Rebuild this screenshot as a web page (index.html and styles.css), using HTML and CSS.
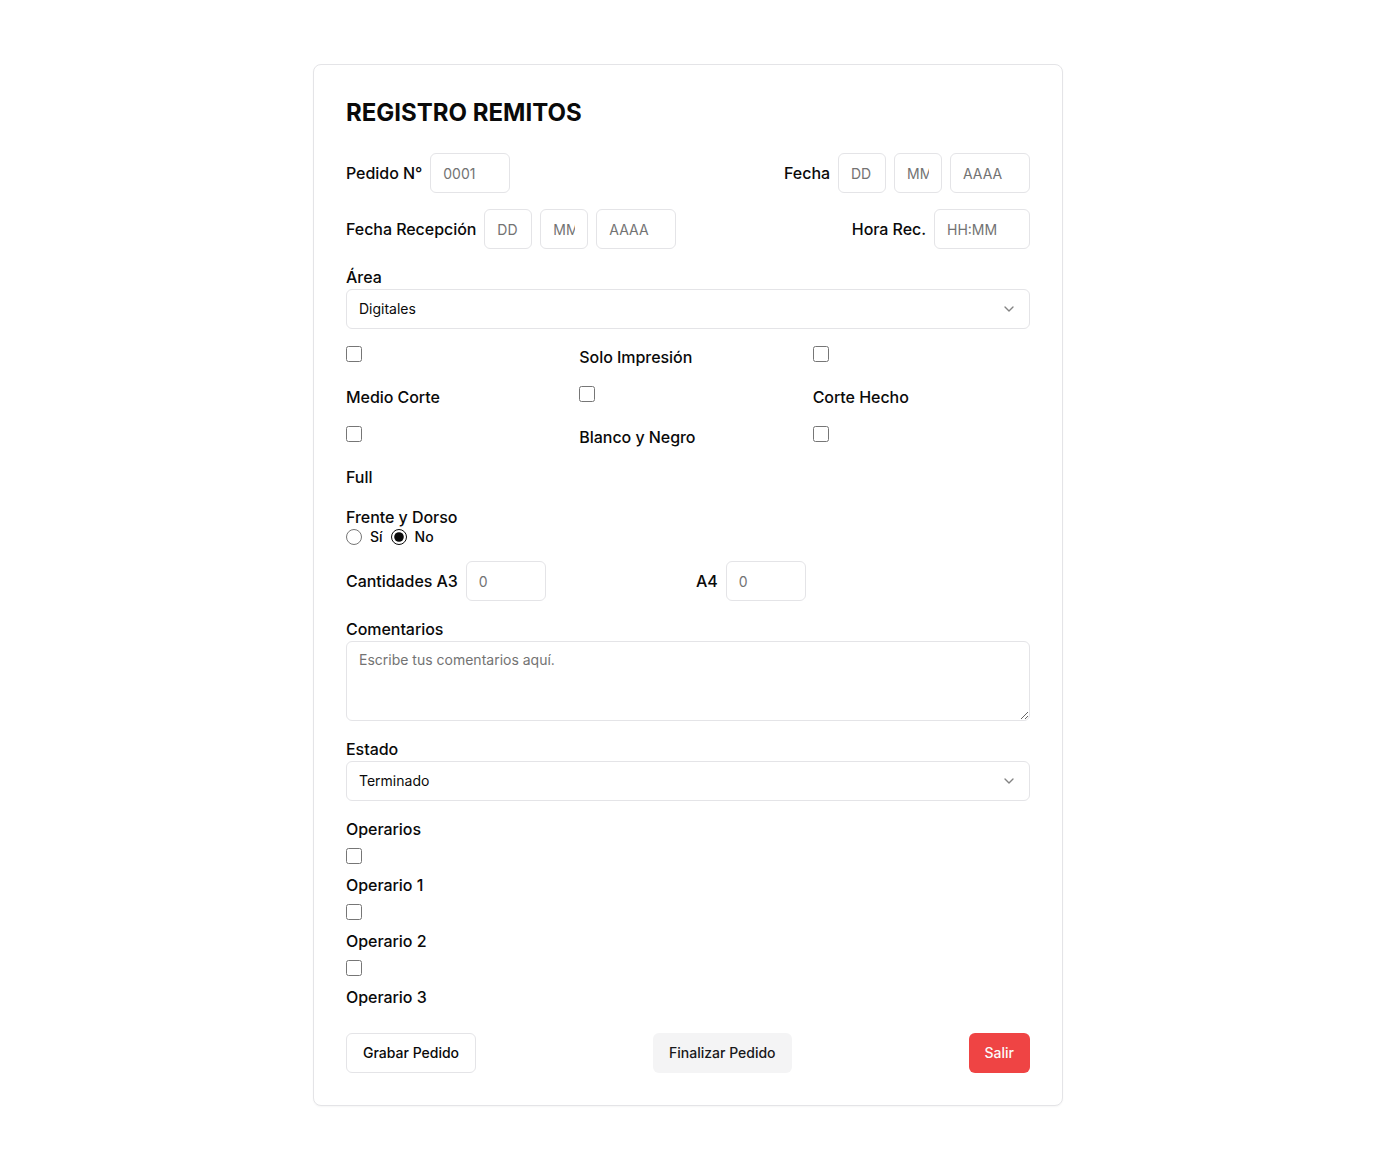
FILE: index.html
```html
<!DOCTYPE html>
<html lang="es">
<head>
<meta charset="utf-8">
<title>Registro Remitos</title>
<link rel="stylesheet" href="styles.css">
</head>
<body>
<div class="card">
  <h1 class="title">REGISTRO REMITOS</h1>
  <form class="form">
    <div class="row">
      <div class="inline-field">
        <label class="label">Pedido N°</label>
        <input class="input w20" placeholder="0001">
      </div>
      <div class="inline-field">
        <label class="label">Fecha</label>
        <input class="input w12" placeholder="DD">
        <input class="input w12" placeholder="MM">
        <input class="input w20" placeholder="AAAA">
      </div>
    </div>
    <div class="row">
      <div class="inline-field">
        <label class="label">Fecha Recepción</label>
        <input class="input w12" placeholder="DD">
        <input class="input w12" placeholder="MM">
        <input class="input w20" placeholder="AAAA">
      </div>
      <div class="inline-field">
        <label class="label">Hora Rec.</label>
        <input class="input w24" placeholder="HH:MM">
      </div>
    </div>
    <div class="stack">
      <label class="label block">Área</label>
      <button type="button" class="select">
        <span>Digitales</span>
        <svg class="chev" width="16" height="16" viewBox="0 0 24 24" fill="none" stroke="currentColor" stroke-width="2" stroke-linecap="round" stroke-linejoin="round"><path d="m6 9 6 6 6-6"/></svg>
      </button>
    </div>
    <div class="grid3">
      <div class="cell"><input type="checkbox" class="check"></div>
      <div class="cell"><label class="label">Solo Impresión</label></div>
      <div class="cell"><input type="checkbox" class="check"></div>
      <div class="cell"><label class="label">Medio Corte</label></div>
      <div class="cell"><input type="checkbox" class="check"></div>
      <div class="cell"><label class="label">Corte Hecho</label></div>
      <div class="cell"><input type="checkbox" class="check"></div>
      <div class="cell"><label class="label">Blanco y Negro</label></div>
      <div class="cell"><input type="checkbox" class="check"></div>
      <div class="cell"><label class="label">Full</label></div>
    </div>
    <div class="stack">
      <label class="label block">Frente y Dorso</label>
      <div class="radios">
        <input type="radio" name="fyd" class="radio" id="fyd-si">
        <label for="fyd-si" class="radio-label">Sí</label>
        <input type="radio" name="fyd" class="radio" id="fyd-no" checked>
        <label for="fyd-no" class="radio-label">No</label>
      </div>
    </div>
    <div class="grid2">
      <div class="inline-field">
        <label class="label">Cantidades A3</label>
        <input class="input w20" placeholder="0">
      </div>
      <div class="inline-field">
        <label class="label">A4</label>
        <input class="input w20" placeholder="0">
      </div>
    </div>
    <div class="stack">
      <label class="label block">Comentarios</label>
      <textarea class="textarea" placeholder="Escribe tus comentarios aquí."></textarea>
    </div>
    <div class="stack">
      <label class="label block">Estado</label>
      <button type="button" class="select">
        <span>Terminado</span>
        <svg class="chev" width="16" height="16" viewBox="0 0 24 24" fill="none" stroke="currentColor" stroke-width="2" stroke-linecap="round" stroke-linejoin="round"><path d="m6 9 6 6 6-6"/></svg>
      </button>
    </div>
    <div class="stack">
      <label class="label block">Operarios</label>
      <div class="op-list">
        <div class="op-item">
          <div class="op-check"><input type="checkbox" class="check"></div>
          <label class="label block op-label">Operario 1</label>
        </div>
        <div class="op-item">
          <div class="op-check"><input type="checkbox" class="check"></div>
          <label class="label block op-label">Operario 2</label>
        </div>
        <div class="op-item">
          <div class="op-check"><input type="checkbox" class="check"></div>
          <label class="label block op-label">Operario 3</label>
        </div>
      </div>
    </div>
    <div class="actions">
      <button type="button" class="btn btn-outline">Grabar Pedido</button>
      <button type="button" class="btn btn-secondary">Finalizar Pedido</button>
      <button type="button" class="btn btn-danger">Salir</button>
    </div>
  </form>
</div>
</body>
</html>
```
FILE: styles.css
```css
* {
  box-sizing: border-box;
}

html, body {
  margin: 0;
  padding: 0;
  background: #ffffff;
}

body {
  font-family: Inter, "Liberation Sans", sans-serif;
  color: #0a0a0a;
  font-size: 16px;
  line-height: 24px;
}

.card {
  width: 750px;
  margin: 64px auto 64px;
  padding: 32px;
  border: 1px solid #e4e4e7;
  border-radius: 8px;
  background: #ffffff;
  box-shadow: 0 1px 2px rgba(0, 0, 0, 0.04);
}

.title {
  margin: 0 0 24px;
  font-size: 24px;
  line-height: 32px;
  font-weight: 700;
  letter-spacing: 0;
}

.form {
  display: flex;
  flex-direction: column;
  gap: 16px;
  margin: 0;
}

.row {
  display: flex;
  align-items: center;
  justify-content: space-between;
}

.inline-field {
  display: flex;
  align-items: center;
  gap: 8px;
}

.label {
  font-size: 16px;
  line-height: 24px;
  font-weight: 500;
  letter-spacing: -0.05px;
}

.block {
  display: block;
}

.input {
  height: 40px;
  margin: 0;
  padding: 8px 12px;
  border: 1px solid #e4e4e7;
  border-radius: 6px;
  background: #ffffff;
  font-family: inherit;
  font-size: 14px;
  line-height: 20px;
  color: #0a0a0a;
  outline: none;
}

.input::placeholder,
.textarea::placeholder {
  color: #737373;
}

.w12 { width: 48px; }
.w20 { width: 80px; }
.w24 { width: 96px; }

.stack {
  display: block;
}

.select {
  display: flex;
  align-items: center;
  justify-content: space-between;
  width: 100%;
  height: 40px;
  margin: 0;
  padding: 8px 12px;
  border: 1px solid #e4e4e7;
  border-radius: 6px;
  background: #ffffff;
  font-family: inherit;
  font-size: 14px;
  line-height: 20px;
  color: #0a0a0a;
  text-align: left;
  cursor: pointer;
}

.chev {
  opacity: 0.5;
  color: #0a0a0a;
  flex-shrink: 0;
}

.grid3 {
  display: grid;
  grid-template-columns: repeat(3, 1fr);
  gap: 16px;
}

.cell {
  line-height: 24px;
  height: 24px;
}

.check {
  width: 16px;
  height: 16px;
  margin: 1px 0 0;
  vertical-align: top;
  accent-color: #0a0a0a;
}

.radios {
  display: flex;
  align-items: center;
  gap: 8px;
  height: 16px;
}

.radio {
  width: 16px;
  height: 16px;
  margin: 0;
  accent-color: #0a0a0a;
}

.radio-label {
  font-size: 14px;
  line-height: 16px;
  font-weight: 500;
}

.grid2 {
  display: grid;
  grid-template-columns: 1fr 1fr;
  gap: 16px;
}

.textarea {
  display: block;
  width: 100%;
  height: 80px;
  min-height: 80px;
  margin: 0;
  padding: 8px 12px;
  border: 1px solid #e4e4e7;
  border-radius: 6px;
  font-family: inherit;
  font-size: 14px;
  line-height: 20px;
  color: #0a0a0a;
  outline: none;
  resize: vertical;
}

.op-list {
  display: flex;
  flex-direction: column;
  gap: 6px;
  margin-top: 6px;
}

.op-check {
  height: 24px;
  line-height: 24px;
}

.op-label {
  margin-top: 2px;
}

.actions {
  display: flex;
  align-items: center;
  justify-content: space-between;
  margin-top: 8px;
}

.btn {
  height: 40px;
  margin: 0;
  padding: 8px 16px;
  border-radius: 6px;
  font-family: inherit;
  font-size: 14px;
  line-height: 20px;
  font-weight: 500;
  cursor: pointer;
}

.btn-outline {
  border: 1px solid #e4e4e7;
  background: #ffffff;
  color: #0a0a0a;
}

.btn-secondary {
  border: 0;
  background: #f4f4f5;
  color: #18181b;
}

.btn-danger {
  border: 0;
  background: #ef4444;
  color: #fafafa;
}
```
